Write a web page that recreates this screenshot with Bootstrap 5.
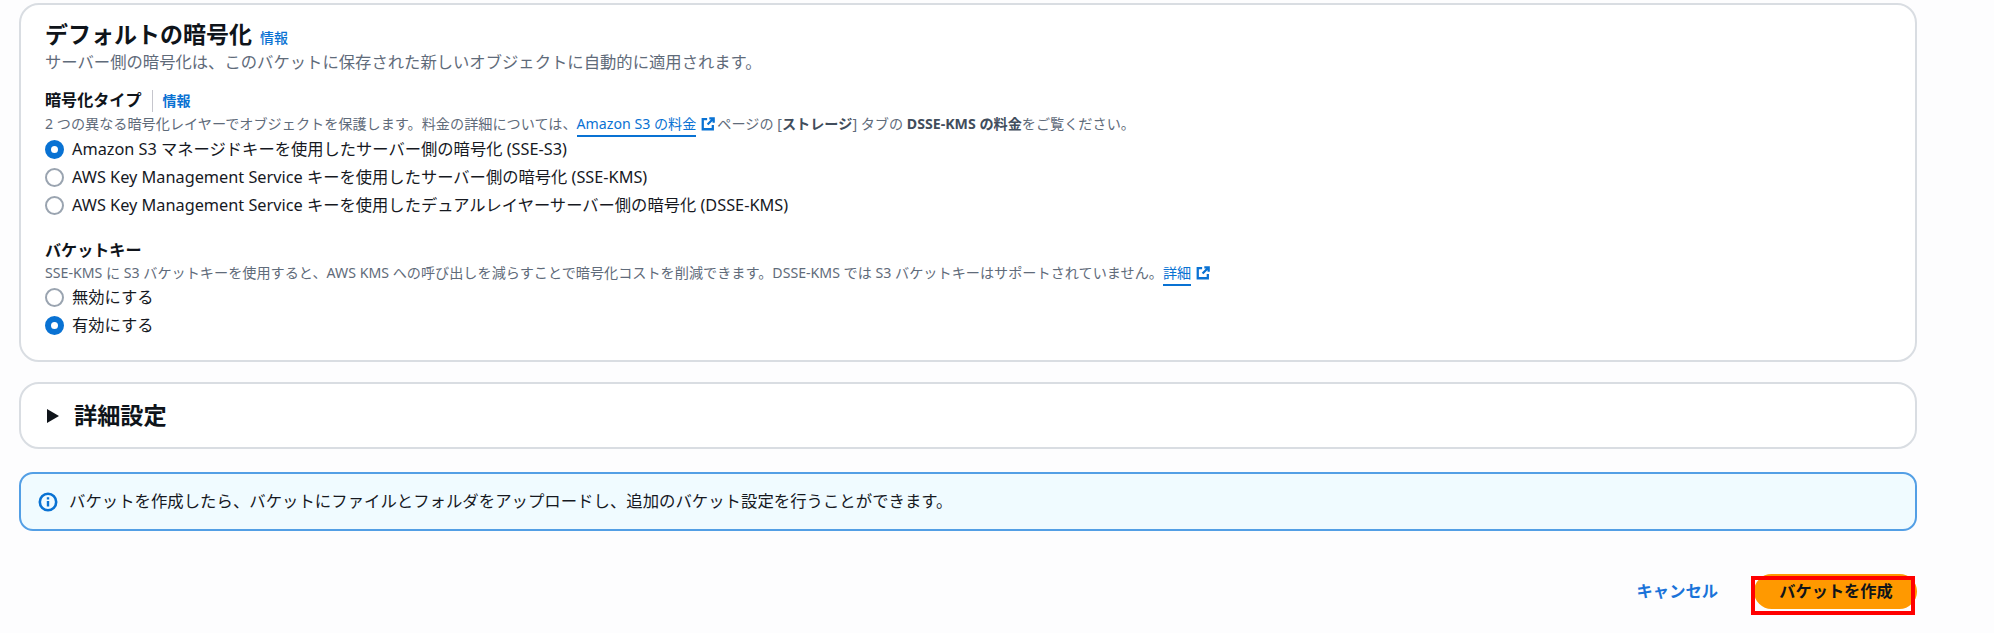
<!DOCTYPE html>
<html lang="ja">
<head>
<meta charset="utf-8">
<title>デフォルトの暗号化</title>
<link href="https://cdn.jsdelivr.net/npm/bootstrap@5.3.0/dist/css/bootstrap.min.css" rel="stylesheet">
<style>
body{background:#fdfdfe;font-family:"Noto Sans","Noto Sans CJK JP",sans-serif;color:#16191f;padding:3px 77px 0 19px;height:633px;overflow:hidden}
.pnl{background:#fff;border:2px solid #d9dde2;border-radius:20px}
.enc-pnl{height:359px;padding:15px 24px 0}
.pnl-title{font-size:23px;font-weight:700;line-height:28px;margin:0;color:#0f141a}
.info-lnk{font-size:14px;font-weight:600;color:#0972d3;text-decoration:none}
.pnl-title .info-lnk{margin-left:2px;font-weight:500}
.pnl-desc{font-size:16.34px;line-height:22px;color:#5f6b7a;margin:-1px 0 0}
.fld-lbl{font-size:16.1px;font-weight:700;line-height:22px;color:#0f141a}
.fld-head{margin-top:15px}
.fld-head .info-lnk{border-left:1px solid #c6c6cd;margin-left:10px;padding-left:10px;line-height:22px;display:inline-block}
.fld-hint{font-size:14.15px;line-height:20px;color:#5f6b7a;margin:2px 0 0}
.fld-hint a{color:#0972d3;text-decoration:none;border-bottom:2px solid #0972d3;padding-bottom:2px}
.fld-hint b{font-weight:700;color:#414d5c}
.ext{width:14px;height:14px;vertical-align:-2px;margin:0 2px 0 5px}
.opt{display:flex;align-items:center;height:28px;font-size:16.3px;color:#16191f;margin:0}
.opt input.form-check-input{width:19px;height:19px;margin:0 8px 0 0;flex:none;border:2px solid #9aa4b0;background-color:#fff;background-image:none}
.opt input.form-check-input:checked{border:6px solid #0972d3;background:#fff}
.opts{margin-top:1px}
.key-fld{margin-top:20px}
.key-fld .opts{margin-top:0}
.adv-pnl{height:67px;margin-top:20px;padding:0 25px 0 26px;gap:15px;font-size:23.2px;font-weight:700;color:#0f141a}
.caret{width:12px;height:14px;flex:none}
.note{height:59px;margin-top:23px;background:#f0fbff;border:2px solid #539fe5;border-radius:14px;padding:0 17px;gap:11px;font-size:16.4px;color:#16191f}
.note svg{width:20px;height:20px;flex:none}
.act-bar{margin-top:43px;position:relative;height:35px;gap:36px}
.cancel-lnk{font-size:16.3px;font-weight:700;color:#1a73d9;text-decoration:none}
.create-btn{width:163px;height:35px;background:#ff9900;border:0;border-radius:18px;font-size:16.2px;font-weight:700;color:#0f141a;padding:0 0 0 1px;}
.red-box{position:absolute;right:2px;top:2px;width:164px;height:39px;border:4px solid #f00;pointer-events:none}
</style>
</head>
<body>
<section class="pnl enc-pnl">
  <h2 class="pnl-title">デフォルトの暗号化 <a class="info-lnk" href="#">情報</a></h2>
  <p class="pnl-desc">サーバー側の暗号化は、このバケットに保存された新しいオブジェクトに自動的に適用されます。</p>
  <div class="fld-head"><span class="fld-lbl">暗号化タイプ</span><a class="info-lnk" href="#">情報</a></div>
  <p class="fld-hint">2 つの異なる暗号化レイヤーでオブジェクトを保護します。料金の詳細については、<a href="#">Amazon S3 の料金</a><svg class="ext" viewBox="0 0 16 16" fill="none" stroke="#0972d3" stroke-width="2.6"><path d="M7 2.5H2v11.5h11.5V9"/><path d="M9.5 1.5h5v5M14 2L7.5 8.5"/></svg>ページの [<b>ストレージ</b>] タブの <b>DSSE-KMS の料金</b>をご覧ください。</p>
  <div class="opts">
    <label class="opt"><input class="form-check-input" type="radio" name="enc" checked>Amazon S3 マネージドキーを使用したサーバー側の暗号化 (SSE-S3)</label>
    <label class="opt"><input class="form-check-input" type="radio" name="enc">AWS Key Management Service キーを使用したサーバー側の暗号化 (SSE-KMS)</label>
    <label class="opt"><input class="form-check-input" type="radio" name="enc">AWS Key Management Service キーを使用したデュアルレイヤーサーバー側の暗号化 (DSSE-KMS)</label>
  </div>
  <div class="key-fld">
    <div class="fld-lbl">バケットキー</div>
    <p class="fld-hint">SSE-KMS に S3 バケットキーを使用すると、AWS KMS への呼び出しを減らすことで暗号化コストを削減できます。DSSE-KMS では S3 バケットキーはサポートされていません。<a href="#">詳細</a><svg class="ext" viewBox="0 0 16 16" fill="none" stroke="#0972d3" stroke-width="2.6"><path d="M7 2.5H2v11.5h11.5V9"/><path d="M9.5 1.5h5v5M14 2L7.5 8.5"/></svg></p>
    <div class="opts">
      <label class="opt"><input class="form-check-input" type="radio" name="key">無効にする</label>
      <label class="opt"><input class="form-check-input" type="radio" name="key" checked>有効にする</label>
    </div>
  </div>
</section>
<section class="pnl adv-pnl d-flex align-items-center">
  <svg class="caret" viewBox="0 0 12 14"><path d="M0 0L12 7L0 14Z" fill="#0f141a"/></svg>
  <span>詳細設定</span>
</section>
<div class="note d-flex align-items-center">
  <svg viewBox="0 0 20 20" fill="none"><circle cx="10" cy="10" r="8.2" stroke="#0972d3" stroke-width="2.6"/><path d="M10 9v5.5M10 5.2v2.2" stroke="#0972d3" stroke-width="2.4"/></svg>
  <span>バケットを作成したら、バケットにファイルとフォルダをアップロードし、追加のバケット設定を行うことができます。</span>
</div>
<div class="act-bar d-flex justify-content-end align-items-center">
  <a class="cancel-lnk" href="#">キャンセル</a>
  <button class="btn create-btn" type="button">バケットを作成</button>
  <div class="red-box"></div>
</div>
<script src="https://cdn.jsdelivr.net/npm/bootstrap@5.3.0/dist/js/bootstrap.bundle.min.js"></script>
</body>
</html>
